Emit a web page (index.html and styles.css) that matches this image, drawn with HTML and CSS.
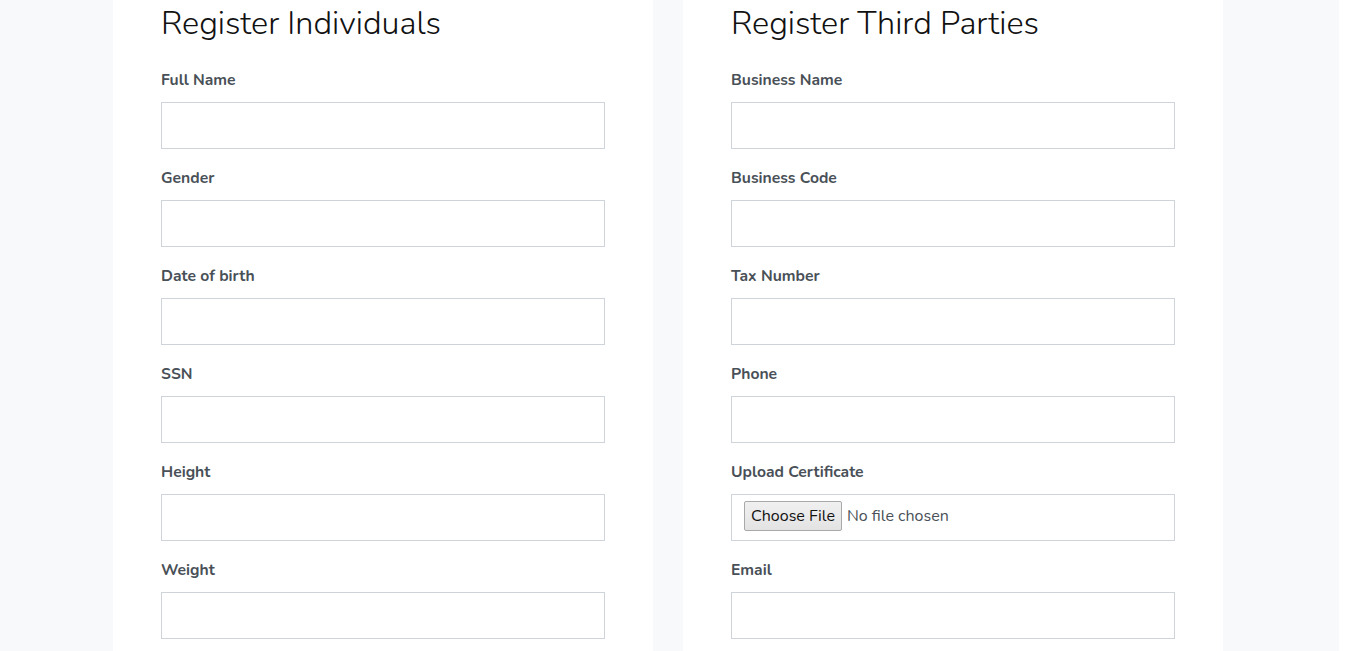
FILE: index.html
```html
<!DOCTYPE html>
<html lang="en">
<head>
<meta charset="utf-8">
<title>Register</title>
<link rel="stylesheet" href="styles.css">
</head>
<body>
<div class="page">
  <div class="columns">
    <section class="card">
      <h1 class="title">Register Individuals</h1>
      <div class="field"><label class="label">Full Name</label><input class="input" type="text"></div>
      <div class="field"><label class="label">Gender</label><input class="input" type="text"></div>
      <div class="field"><label class="label">Date of birth</label><input class="input" type="text"></div>
      <div class="field"><label class="label">SSN</label><input class="input" type="text"></div>
      <div class="field"><label class="label">Height</label><input class="input" type="text"></div>
      <div class="field"><label class="label">Weight</label><input class="input" type="text"></div>
    </section>
    <section class="card">
      <h1 class="title">Register Third Parties</h1>
      <div class="field"><label class="label">Business Name</label><input class="input" type="text"></div>
      <div class="field"><label class="label">Business Code</label><input class="input" type="text"></div>
      <div class="field"><label class="label">Tax Number</label><input class="input" type="text"></div>
      <div class="field"><label class="label">Phone</label><input class="input" type="text"></div>
      <div class="field"><label class="label">Upload Certificate</label>
        <div class="input file-box"><span class="file-btn">Choose File</span><span class="file-text">No file chosen</span></div>
      </div>
      <div class="field"><label class="label">Email</label><input class="input" type="text"></div>
    </section>
  </div>
</div>
</body>
</html>
```

FILE: styles.css
```css
html, body {
  margin: 0;
  padding: 0;
  background: #ffffff;
  height: 100%;
  overflow: hidden;
}
body {
  font-family: "Nunito", "Lato", "Noto Sans", sans-serif;
  color: #212529;
}
.page {
  background: #f8f9fb;
  margin-right: 7px;
  min-height: 651px;
  padding-left: 113px;
}
.columns {
  display: flex;
  gap: 30px;
}
.card {
  width: 540px;
  box-sizing: border-box;
  background: #ffffff;
  padding: 0 48px 40px;
  min-height: 651px;
}
.title {
  margin: 0;
  padding-top: 3px;
  font-size: 32.4px;
  font-weight: 300;
  line-height: 40px;
  color: #111;
}
.field {
  display: flex;
  flex-direction: column;
}
.title + .field {
  margin-top: 26px;
}
.field + .field {
  margin-top: 18px;
}
.label {
  font-size: 15.7px;
  font-weight: 700;
  line-height: 22px;
  color: #495057;
  margin-bottom: 11px;
}
.input {
  box-sizing: border-box;
  width: 444px;
  height: 47px;
  border: 1px solid #ced4da;
  background: #fff;
  margin: 0;
  padding: 0 12px;
  font-family: inherit;
  font-size: 16px;
}
.file-box {
  display: flex;
  align-items: flex-start;
  padding-top: 6px;
}
.file-btn {
  box-sizing: border-box;
  height: 30px;
  padding: 0 6px;
  display: flex;
  align-items: center;
  background: linear-gradient(#f0f0f0, #e3e3e3);
  border: 1px solid #a9a9a9;
  border-radius: 2px;
  font-size: 16px;
  color: #111;
}
.file-text {
  margin-left: 5px;
  line-height: 30px;
  font-size: 16px;
  color: #495057;
}
```
